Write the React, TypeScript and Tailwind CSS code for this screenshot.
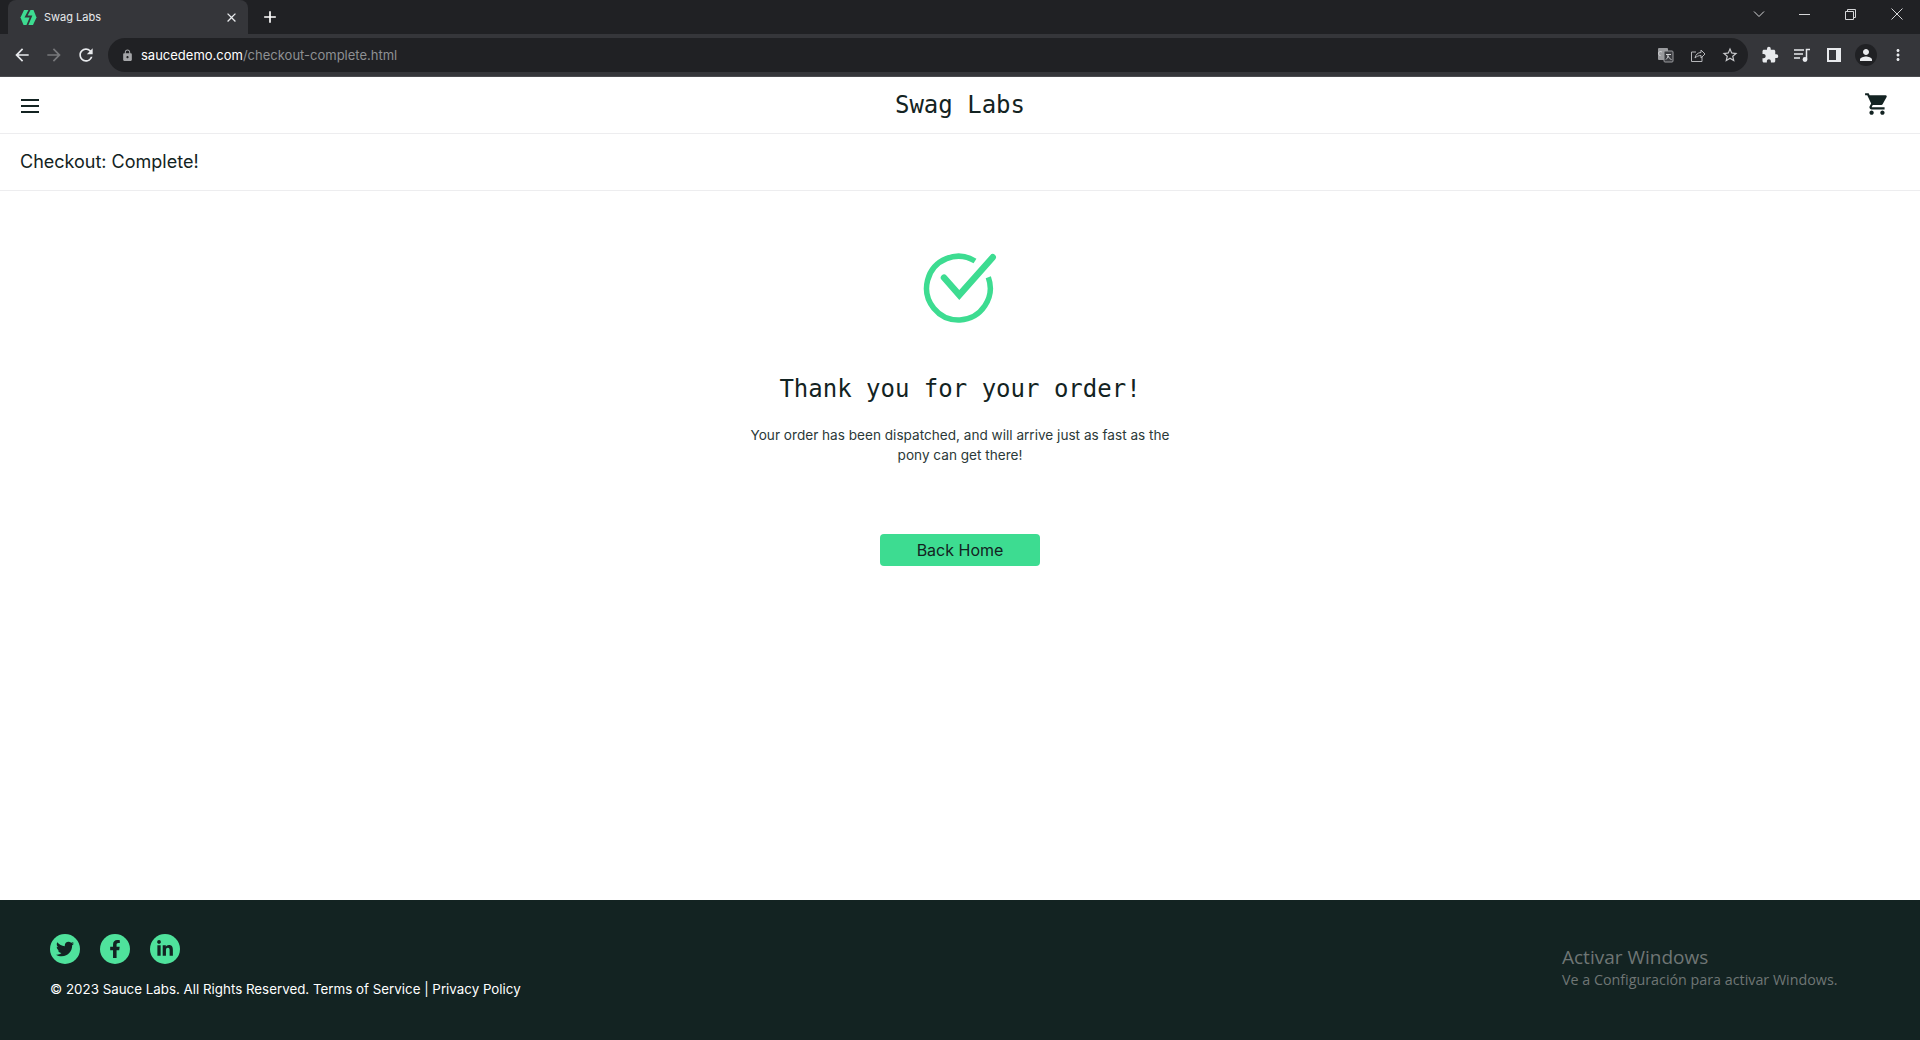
import React from 'react';
import { FaFacebookF, FaLinkedinIn, FaTwitter } from 'react-icons/fa';
import {
  MdAdd,
  MdArrowBack,
  MdArrowForward,
  MdClose,
  MdExtension,
  MdLock,
  MdMoreVert,
  MdOutlineStarBorder,
  MdPerson,
  MdRefresh,
  MdShoppingCart,
} from 'react-icons/md';

const sans = 'font-["Inter","Noto_Sans",sans-serif]';

const Favicon = () => (
  <svg width="17" height="17" viewBox="0 0 17 17" className="shrink-0">
    <path d="M4 1h9.500L16.500 8.500 13 16H3.500L.500 8.500z" fill="#3ddc91" />
    <path d="M10 0 6 7.500h5L7 17" fill="none" stroke="#35363a" strokeWidth="1.800" />
  </svg>
);

const WindowControls = () => (
  <div className="flex items-center ml-auto text-[#d5d6d8]">
    <svg width="12" height="8" viewBox="0 0 12 8" className="mr-[34px] -mt-[6px]" fill="none" stroke="currentColor">
      <path d="M1 1.500 6 6.500 11 1.500" />
    </svg>
    <svg width="11" height="11" viewBox="0 0 11 11" className="mr-[35px] -mt-[6px]" fill="none" stroke="currentColor">
      <path d="M0 5.500h11" />
    </svg>
    <svg width="11" height="11" viewBox="0 0 11 11" className="mr-[35px] -mt-[6px]" fill="none" stroke="currentColor">
      <path d="M.500 2.500h8v8h-8zM2.500 2.500v-2h8v8h-2" />
    </svg>
    <svg width="12" height="12" viewBox="0 0 12 12" className="mr-[17px] -mt-[6px]" fill="none" stroke="currentColor">
      <path d="M.500.500l11 11M11.500.500l-11 11" />
    </svg>
  </div>
);

const TabStrip = () => (
  <div className="flex h-[34px] bg-[#202124] pl-2 items-stretch">
    <div className={`flex items-center w-[240px] bg-[#35363a] rounded-t-lg pl-3 pr-[9px] text-[11px] text-[#e8eaed] ${sans}`}>
      <Favicon />
      <span className="ml-[7px]">Swag Labs</span>
      <MdClose size={15} className="ml-auto text-[#e8eaed]" />
    </div>
    <div className="flex items-center ml-[12px] text-white">
      <MdAdd size={20} />
    </div>
    <WindowControls />
  </div>
);

const Toolbar = () => (
  <div className="flex items-center h-[43px] bg-[#35363a] border-b border-[#4a4b4f] pl-[12px]">
    <MdArrowBack size={20} className="text-[#e8eaed]" />
    <MdArrowForward size={20} className="ml-[12px] text-[#77787b]" />
    <MdRefresh size={20} className="ml-[12px] text-[#e8eaed]" />
    <div className="flex items-center w-[1640px] h-[34px] ml-[12px] rounded-full bg-[#202124] pl-[13px] pr-[10px]">
      <MdLock size={13} className="text-[#a5a6a9]" />
      <span className={`ml-[7px] pt-[1px] text-[13px] ${sans}`}>
        <span className="text-white">saucedemo.com</span>
        <span className="text-[#8e9093]">/checkout-complete.html</span>
      </span>
      <div className="flex items-center gap-[16px] ml-auto text-[#b5b6b9]">
        <svg width="16" height="16" viewBox="0 0 16 16">
          <rect x="0" y="1" width="10" height="12" rx="1" fill="#9a9b9e" />
          <rect x="6" y="4" width="9" height="11" rx="1" fill="#3b3c40" stroke="#9a9b9e" />
          <path d="M2.500 8.500a2 2 0 1 1 1.500-3.300M8 7.500h5M10 7.500c0 3-1 4-2 5M10 9c1 2 2 3 3.500 3.500" fill="none" stroke="#d5d6d8" />
        </svg>
        <svg width="16" height="16" viewBox="0 0 16 16" fill="none" stroke="currentColor">
          <path d="M12 9.500v5H1.500V5H6M5 11c.500-3.500 3-5.500 6-5.500V3l4 4-4 4V8.500c-2.500 0-4.500 1-6 2.500z" />
        </svg>
        <MdOutlineStarBorder size={18} className="-mx-px text-[#c8c9cc]" />
      </div>
    </div>
    <div className="flex items-center ml-[13px] text-[#e8eaed]">
      <MdExtension size={18} />
      <svg width="16" height="14" viewBox="0 0 16 14" className="ml-[15px]" fill="none" stroke="currentColor" strokeWidth="1.500">
        <path d="M0 2h10M0 6h9M0 10h6M12.500 11V1.500H16" />
        <circle cx="11" cy="11.500" r="1.700" fill="currentColor" />
      </svg>
      <div className="ml-[17px] w-[14px] h-[14px] bg-[#e8eaed] flex justify-start">
        <div className="ml-[2px] mt-[2px] w-[7px] h-[10px] bg-[#35363a]" />
      </div>
      <div className="ml-[14px] flex items-center justify-center w-[22px] h-[22px] rounded-full bg-[#202124]">
        <MdPerson size={18} />
      </div>
      <MdMoreVert size={18} className="ml-[12px]" />
    </div>
  </div>
);

const MenuIcon = () => (
  <svg width="18" height="14" viewBox="0 0 18 14" fill="#132322" className="mt-[2px]">
    <rect y="0" width="18" height="2" />
    <rect y="6" width="18" height="2" />
    <rect y="12" width="18" height="2" />
  </svg>
);

const CheckIcon = () => (
  <svg width="80" height="80" viewBox="0 0 80 80" fill="none" stroke="#3ddc91" strokeLinecap="round">
    <path d="M68.300 27.300A31.800 31.800 0 1 1 55 11" strokeWidth="5.500" strokeLinecap="butt" />
    <path d="M24 27.700 39.300 45 72.700 7.300" strokeWidth="6.500" strokeLinejoin="miter" />
  </svg>
);

const socials = [FaTwitter, FaFacebookF, FaLinkedinIn];

export default function App() {
  return (
    <div className={`relative flex flex-col h-[1040px] overflow-hidden bg-white text-[#132322] ${sans}`}>
      <TabStrip />
      <Toolbar />

      <header className="relative flex items-center justify-between h-[57px] border-b border-[#ededef] pl-[21px] pr-[30px]">
        <MenuIcon />
        <div className='absolute left-0 right-0 text-center text-[24px] leading-[54px] font-["DejaVu_Sans_Mono",monospace]'>
          Swag Labs
        </div>
        <MdShoppingCart size={26} className="-mt-[3px]" />
      </header>

      <div className="flex items-center h-[57px] border-b border-[#ededef] px-5 pb-[2px] text-[18px]">
        Checkout: Complete!
      </div>

      <main className="flex flex-col items-center flex-1 pt-[59px]">
        <CheckIcon />
        <h2 className='mt-[44px] text-[24px] leading-[30px] font-["DejaVu_Sans_Mono",monospace] font-normal'>
          Thank you for your order!
        </h2>
        <p className="mt-[21px] w-[430px] text-center text-[13.600px] leading-[20px] text-[#2b3938]">
          Your order has been dispatched, and will arrive just as fast as the pony can get there!
        </p>
        <button className="mt-[69px] w-[160px] h-[32px] rounded bg-[#3ddc91] text-[16px]">Back Home</button>
      </main>

      <footer className="h-[140px] bg-[#132322] pl-[50px] pt-[34px] text-white">
        <div className="flex gap-[20px]">
          {socials.map((Icon, i) => (
            <div key={i} className="flex items-center justify-center w-[30px] h-[30px] rounded-full bg-[#4fe29c] text-[#132322]">
              <Icon size={18} />
            </div>
          ))}
        </div>
        <p className="mt-[15px] text-[13.350px] leading-[20px]">
          © 2023 Sauce Labs. All Rights Reserved. Terms of Service | Privacy Policy
        </p>
      </footer>

      {/* windows watermark sits over the footer */}
      <div className='absolute left-[1562px] top-[944px] text-[#6f7675] font-["Open_Sans",sans-serif]'>
        <div className="text-[19px] leading-[26px]">Activar Windows</div>
        <div className="text-[14.300px] leading-[20px]">Ve a Configuración para activar Windows.</div>
      </div>
    </div>
  );
}
